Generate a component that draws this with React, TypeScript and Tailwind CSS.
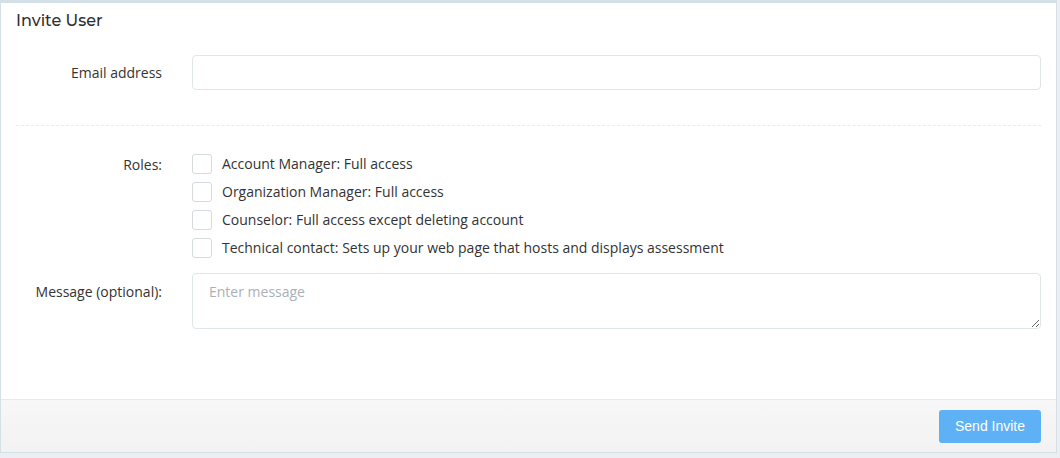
const roles = [
  "Account Manager: Full access",
  "Organization Manager: Full access",
  "Counselor: Full access except deleting account",
  "Technical contact: Sets up your web page that hosts and displays assessment",
];

export default function App() {
  return (
    <div className="w-[1060px] h-[458px] bg-[#eceef1] font-['Open_Sans',sans-serif] text-[14px] text-[#333]">
      <div className="w-[1057px] h-[453px] bg-white border border-[#d3e0e7] border-t-[3px] flex flex-col">
        <div className="h-[34px] pl-[15px] pt-[7px]">
          <h2 className="font-['Montserrat','Inter',sans-serif] font-medium text-[16px] text-[#2f2f2f] leading-[22px]">
            Invite User
          </h2>
        </div>
        <div className="flex-1 px-[15px]">
          <div className="flex items-center pt-[18px] pb-[35px]">
            <label className="w-[146px] text-right leading-5 mr-[30px]">Email address</label>
            <input
              type="text"
              className="flex-1 h-[35px] border border-[#dfe6e8] rounded-[4px] px-3 outline-none"
            />
          </div>
          <div className="border-t border-dashed border-[#e8ecee]" />
          <div className="flex pt-[28px]">
            <label className="w-[146px] text-right mr-[30px] leading-5 pt-[1px]">Roles:</label>
            <div className="flex flex-col gap-[8px]">
              {roles.map((r) => (
                <label key={r} className="flex items-center h-5">
                  <span className="w-5 h-5 border border-[#d5dadd] rounded-[3px] bg-white mr-[10px]" />
                  <span className="leading-5">{r}</span>
                </label>
              ))}
            </div>
          </div>
          <div className="flex pt-[15px]">
            <label className="w-[146px] text-right mr-[30px] leading-5 pt-[9px]">Message (optional):</label>
            <textarea
              placeholder="Enter message"
              className="flex-1 h-[56px] border border-[#dfe6e8] rounded-[4px] px-4 py-[8px] leading-5 outline-none placeholder:text-[#aab0b8] resize-y"
            />
          </div>
        </div>
        <div className="h-[53px] border-t border-[#e7eaec] bg-gradient-to-b from-[#f7f7f7] to-[#f2f2f2] flex items-center justify-end pr-[15px]">
          <button className="h-[33px] w-[102px] bg-[#5db1f4] rounded-[3px] text-white text-[14px] font-['Liberation_Sans',Arial,sans-serif] mt-[1px]">
            Send Invite
          </button>
        </div>
      </div>
    </div>
  );
}
